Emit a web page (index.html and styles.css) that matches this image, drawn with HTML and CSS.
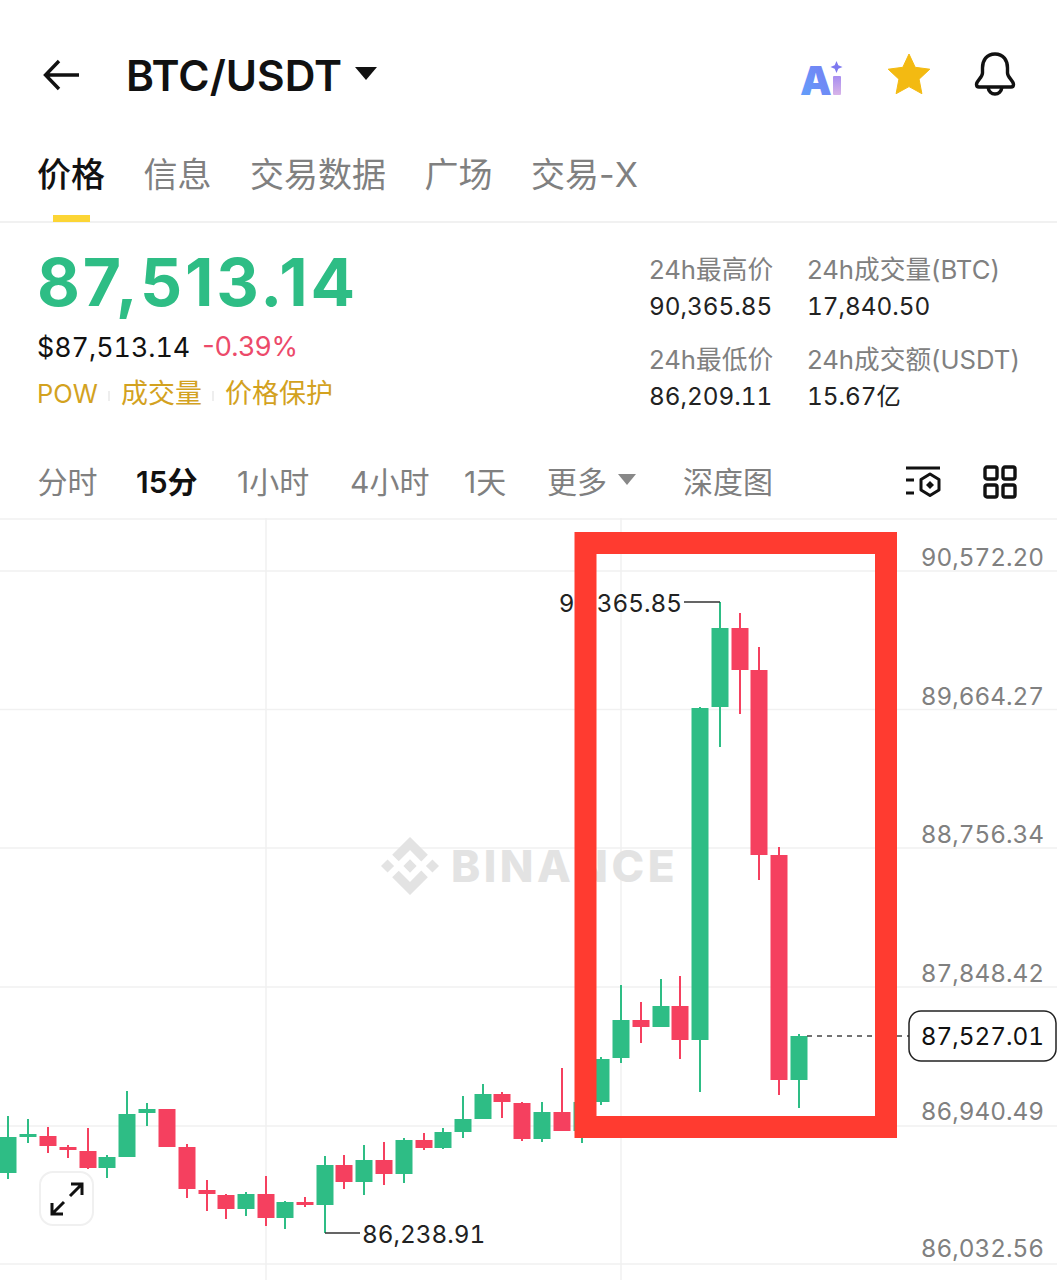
FILE: index.html
```html
<!DOCTYPE html>
<html lang="zh-CN">
<head>
  <meta charset="UTF-8">
  <meta name="viewport" content="width=device-width, initial-scale=1.0">
  <title>BTC/USDT</title>
  <link rel="stylesheet" href="styles.css">
</head>
<body>
  <header class="topbar">
    <svg class="back" viewBox="0 0 38 32" width="38" height="32">
      <path d="M36 16H3M16 2L2.500 16L16 30" fill="none" stroke="#111" stroke-width="3.400"/>
    </svg>
    <h1 class="pair">BTC/USDT</h1>
    <span class="pair-caret"></span>
    <div class="top-icons">
      <svg class="ai" viewBox="0 0 44 36" width="44" height="36">
        <defs>
          <linearGradient id="aiA" x1="0" y1="1" x2="1" y2="0">
            <stop offset="0" stop-color="#5fa4fb"/>
            <stop offset="1" stop-color="#7a78f2"/>
          </linearGradient>
          <linearGradient id="aiI" x1="0" y1="0" x2="0" y2="1">
            <stop offset="0" stop-color="#a78df0"/>
            <stop offset="1" stop-color="#d8b4e8"/>
          </linearGradient>
        </defs>
        <text x="0" y="35" class="ai-a" fill="url(#aiA)">A</text>
        <rect x="33" y="16" width="8" height="19" rx="1" fill="url(#aiI)"/>
        <path d="M36.500 1L38.300 5.200L42.500 7L38.300 8.800L36.500 13L34.700 8.800L30.500 7L34.700 5.200Z" fill="#7d78f0"/>
      </svg>
      <svg class="star" viewBox="0 0 42 40" width="42" height="40">
        <path d="M21 0L27.200 13.300L41.800 15.200L31.100 25.200L33.900 39.700L21 32.600L8.100 39.700L10.900 25.200L0.200 15.200L14.800 13.300Z" fill="#f3ba12" stroke="#f3ba12" stroke-linejoin="round"/>
      </svg>
      <svg class="bell" viewBox="0 0 42 44" width="42" height="44">
        <path d="M21 2C12.500 2 8.500 8.500 8.500 16V21C8.500 25.500 2.500 28.500 2.500 32.500C2.500 34 3.500 35 5 35H37C38.500 35 39.500 34 39.500 32.500C39.500 28.500 33.500 25.500 33.500 21V16C33.500 8.500 29.500 2 21 2Z" fill="none" stroke="#111" stroke-width="3.400" stroke-linejoin="round"/>
        <path d="M14 35C14.500 39.500 17.500 42 21 42C24.500 42 27.500 39.500 28 35" fill="none" stroke="#111" stroke-width="3.400"/>
      </svg>
    </div>
  </header>

  <nav class="tabs">
    <a class="tab active">价格</a>
    <a class="tab">信息</a>
    <a class="tab">交易数据</a>
    <a class="tab">广场</a>
    <a class="tab">交易-X</a>
  </nav>

  <section class="stats">
    <div class="price-block">
      <div class="last-price">87,513.14</div>
      <div class="sub-price"><span class="fiat">$87,513.14</span><span class="change">-0.39%</span></div>
      <div class="tags">
        <span class="tag-latin">POW</span><i></i><span>成交量</span><i></i><span>价格保护</span>
      </div>
    </div>
    <dl class="day-stats">
      <div><dt>24h最高价</dt><dd>90,365.85</dd></div>
      <div><dt>24h成交量(BTC)</dt><dd>17,840.50</dd></div>
      <div><dt>24h最低价</dt><dd>86,209.11</dd></div>
      <div><dt>24h成交额(USDT)</dt><dd>15.67亿</dd></div>
    </dl>
  </section>

  <div class="intervals">
    <span class="iv iv-time">分时</span>
    <span class="iv iv-15 active">15分</span>
    <span class="iv iv-1h">1小时</span>
    <span class="iv iv-4h">4小时</span>
    <span class="iv iv-1d">1天</span>
    <span class="iv iv-more">更多<b class="more-caret"></b></span>
    <span class="iv iv-depth">深度图</span>
    <div class="chart-tools">
      <svg viewBox="0 0 36 34" width="36" height="34">
        <path d="M1 3H35M1 15H9M1 28H9" fill="none" stroke="#111" stroke-width="3"/>
        <path d="M25 9L34 14.500V25L25 30.500L16 25V14.500Z" fill="none" stroke="#111" stroke-width="3" stroke-linejoin="round"/>
        <path d="M25 16L29 20L25 24L21 20Z" fill="#111"/>
      </svg>
      <svg viewBox="0 0 34 34" width="34" height="34">
        <g fill="none" stroke="#111" stroke-width="3.400">
          <rect x="2" y="2" width="12" height="12" rx="2"/>
          <rect x="20" y="2" width="12" height="12" rx="2"/>
          <rect x="2" y="20" width="12" height="12" rx="2"/>
          <rect x="20" y="20" width="12" height="12" rx="2"/>
        </g>
      </svg>
    </div>
  </div>

  <main class="chart">
    <svg class="chart-svg" viewBox="0 518 1057 762" width="1057" height="762">
      <path class="grid" d="M0 519H1057M0 571H1057M0 709.500H1057M0 848H1057M0 987H1057M0 1126H1057M0 1264H1057M266 518V1280M621 518V1280"/>

      <g class="watermark">
        <svg x="381" y="837" width="58" height="58" viewBox="0 0 126.610 126.610">
          <path d="M38.730 53.200L63.320 28.620L87.930 53.230L102.240 38.920L63.320 0L24.430 38.900Z"/>
          <path d="M0 63.310L14.300 49L28.610 63.310L14.300 77.610Z"/>
          <path d="M38.730 73.410L63.320 97.990L87.920 73.390L102.230 87.680L63.320 126.610L24.420 87.700Z"/>
          <path d="M98 63.310L112.300 49L126.610 63.310L112.300 77.610Z"/>
          <path d="M77.830 63.300L63.320 48.780L48.820 63.280L63.320 77.780Z"/>
        </svg>
        <text x="451" y="882">BINANCE</text>
      </g>

      <g id="candles"></g>

      <path class="leader" d="M684 602H720M325 1233H360"/>
      <text class="mark" x="682" y="612" text-anchor="end">90,365.85</text>
      <text class="mark" x="362" y="1243">86,238.91</text>

      <path class="last-line" d="M807 1036H909"/>

      <rect class="frame" x="585.500" y="543" width="300.500" height="584"/>

      <g class="axis">
        <text x="1044" y="566">90,572.20</text>
        <text x="1044" y="705">89,664.27</text>
        <text x="1044" y="843">88,756.34</text>
        <text x="1044" y="982">87,848.42</text>
        <text x="1044" y="1120">86,940.49</text>
        <text x="1044" y="1257">86,032.56</text>
      </g>

      <rect class="last-tag" x="909" y="1011" width="147" height="50" rx="12"/>
      <text class="last-value" x="1044" y="1045">87,527.01</text>
    </svg>

    <button class="expand">
      <svg viewBox="0 0 36 36" width="36" height="36">
        <path d="M3 33L15 21M3 22V33H14M33 3L21 15M22 3H33V14" fill="none" stroke="#111" stroke-width="3"/>
      </svg>
    </button>
  </main>

  <script src="chart.js"></script>
</body>
</html>
```

FILE: styles.css
```css
:root {
  --green: #2ebd85;
  --red: #f6465d;
  --gold: #d3a21f;
  --grey: #808080;
  --line: #f1f1f1;
  --text: #111;
}

* {
  margin: 0;
  padding: 0;
  box-sizing: border-box;
}

body {
  width: 1057px;
  height: 1280px;
  overflow: hidden;
  background: #fff;
  color: var(--text);
  font-family: Inter, "Noto Sans CJK SC", sans-serif;
}

.fiat,
.day-stats dd,
.mark,
.axis text,
.last-value {
  font-variant-numeric: tabular-nums;
}

.topbar {
  height: 150px;
  display: flex;
  align-items: center;
  padding: 0 41px 0 43px;
}

.back {
  margin-right: 45px;
}

.pair {
  font-size: 42.500px;
  font-weight: 600;
}

.pair-caret {
  margin: -3px 0 0 13px;
  border-left: 11px solid transparent;
  border-right: 11px solid transparent;
  border-top: 13px solid #111;
}

.top-icons {
  margin-left: auto;
  display: flex;
  align-items: center;
  gap: 44px;
}

.ai {
  margin-top: 6px;
  overflow: visible;
}

.ai-a {
  font-size: 40px;
  font-weight: 900;
}

.star {
  margin-top: -3px;
}

.bell {
  margin-top: -3px;
}

.tabs {
  height: 73px;
  display: flex;
  gap: 38.500px;
  padding: 3px 37px 0;
  border-bottom: 2px solid var(--line);
}

.tab {
  position: relative;
  font-size: 34px;
  line-height: 44px;
  color: var(--grey);
}

.tab.active {
  color: var(--text);
  font-weight: 500;
}

.tab.active::after {
  content: "";
  position: absolute;
  left: 16px;
  top: 62px;
  width: 37px;
  height: 7px;
  background: #fcd535;
}

.stats {
  height: 222px;
  display: flex;
  justify-content: space-between;
  padding: 0 37px 0 37px;
}

.last-price {
  margin-top: 21px;
  font-size: 66px;
  line-height: 76px;
  font-weight: 700;
  letter-spacing: 2.800px;
  color: var(--green);
}

.sub-price {
  margin-top: 9px;
  display: flex;
  gap: 12px;
  font-size: 26.800px;
  line-height: 36px;
}

.change {
  font-size: 27px;
  color: #ec4a6a;
}

.tags {
  margin-top: 9px;
  display: flex;
  align-items: center;
  gap: 10.500px;
  font-size: 27px;
  line-height: 40px;
  color: var(--gold);
}

.tag-latin {
  font-size: 25.500px;
}

.tags i {
  width: 2px;
  height: 10px;
  margin-top: 4px;
  background: #eee;
}

.day-stats {
  margin-top: 29px;
  width: 371px;
  display: grid;
  grid-template-columns: 158px 1fr;
  row-gap: 18px;
  align-content: start;
  font-size: 25.700px;
  line-height: 36px;
  white-space: nowrap;
}

.day-stats dt {
  color: var(--grey);
}

.day-stats dd {
  font-size: 24.300px;
  color: #222;
}

.intervals {
  height: 73px;
  display: flex;
  align-items: center;
  padding: 0 40px 4px 37.500px;
  font-size: 30px;
  color: var(--grey);
}

.iv-time { width: 98.500px; }
.iv-15 { width: 101px; }
.iv-1h { width: 113px; }
.iv-4h { width: 114px; }
.iv-1d { width: 83px; }
.iv-more { width: 136px; display: flex; align-items: center; }

.iv.active {
  color: var(--text);
  font-weight: 600;
}

.more-caret {
  margin: 0 0 0 11px;
  border-left: 9px solid transparent;
  border-right: 9px solid transparent;
  border-top: 11px solid #888;
}

.chart-tools {
  margin: 4px 0 0 auto;
  display: flex;
  align-items: center;
  gap: 42px;
}

.chart {
  position: relative;
  height: 762px;
  overflow: hidden;
}

.chart-svg {
  display: block;
}

.grid {
  fill: none;
  stroke: var(--line);
  stroke-width: 1.500;
}

.watermark {
  fill: #e3e3e3;
}

.watermark text {
  font-size: 44px;
  font-weight: 800;
  letter-spacing: 3.500px;
}

.up { fill: var(--green); }
.down { fill: #f5405f; }

.leader {
  fill: none;
  stroke: #333;
  stroke-width: 1.500;
}

.mark {
  font-size: 24.300px;
  fill: #222;
}

.last-line {
  stroke: #444;
  stroke-width: 1.500;
  stroke-dasharray: 5 5;
}

.frame {
  fill: none;
  stroke: #ff3b30;
  stroke-width: 22;
}

.axis text {
  font-size: 24.300px;
  fill: var(--grey);
  text-anchor: end;
}

.last-tag {
  fill: #fff;
  stroke: #222;
  stroke-width: 1.500;
}

.last-value {
  font-size: 24.300px;
  fill: #111;
  text-anchor: end;
}

.expand {
  position: absolute;
  left: 39px;
  top: 653px;
  width: 55px;
  height: 55px;
  display: flex;
  align-items: center;
  justify-content: center;
  background: #fff;
  border: 2px solid #f0f0f0;
  border-radius: 14px;
}
```

FILE: chart.js
```js
// x, high, low, body top, body bottom, direction
const candles = [
  [8, 1116, 1179, 1137, 1173, 'up'],
  [28, 1119, 1143, 1134, 1137, 'up'],
  [48, 1127, 1153, 1136, 1146, 'down'],
  [68, 1145, 1158, 1147, 1150, 'down'],
  [88, 1128, 1169, 1151, 1168, 'down'],
  [107, 1155, 1178, 1157, 1168, 'up'],
  [127, 1091, 1157, 1114, 1157, 'up'],
  [147, 1103, 1126, 1109, 1113, 'up'],
  [167, 1109, 1147, 1109, 1147, 'down'],
  [187, 1144, 1198, 1147, 1189, 'down'],
  [207, 1180, 1211, 1190, 1194, 'down'],
  [226, 1194, 1219, 1195, 1209, 'down'],
  [246, 1192, 1216, 1194, 1209, 'up'],
  [266, 1176, 1226, 1194, 1218, 'down'],
  [285, 1201, 1229, 1202, 1218, 'up'],
  [305, 1197, 1207, 1202, 1205, 'down'],
  [325, 1156, 1233, 1165, 1205, 'up'],
  [344, 1155, 1189, 1165, 1182, 'down'],
  [364, 1145, 1195, 1160, 1182, 'up'],
  [384, 1142, 1185, 1160, 1174, 'down'],
  [404, 1138, 1183, 1140, 1174, 'up'],
  [424, 1133, 1150, 1140, 1148, 'down'],
  [443, 1128, 1149, 1132, 1148, 'up'],
  [463, 1096, 1138, 1119, 1132, 'up'],
  [483, 1084, 1119, 1094, 1119, 'up'],
  [502, 1092, 1118, 1094, 1102, 'down'],
  [522, 1102, 1141, 1103, 1139, 'down'],
  [542, 1102, 1142, 1112, 1139, 'up'],
  [562, 1068, 1131, 1112, 1131, 'down'],
  [582, 1102, 1143, 1102, 1131, 'up'],
  [601, 1057, 1105, 1059, 1102, 'up'],
  [621, 985, 1063, 1020, 1058, 'up'],
  [641, 1002, 1043, 1020, 1027, 'down'],
  [661, 979, 1027, 1006, 1027, 'up'],
  [680, 976, 1059, 1006, 1040, 'down'],
  [700, 707, 1092, 708, 1040, 'up'],
  [720, 602, 747, 628, 707, 'up'],
  [740, 613, 714, 628, 670, 'down'],
  [759, 647, 880, 670, 855, 'down'],
  [779, 847, 1095, 855, 1080, 'down'],
  [799, 1034, 1108, 1036, 1080, 'up']
];

const group = document.getElementById('candles');

function addRect(x, y, w, h, cls) {
  const r = document.createElementNS('http://www.w3.org/2000/svg', 'rect');
  r.setAttribute('x', x);
  r.setAttribute('y', y);
  r.setAttribute('width', w);
  r.setAttribute('height', h);
  r.setAttribute('class', cls);
  group.appendChild(r);
}

candles.forEach(([x, high, low, top, bottom, dir]) => {
  addRect(x - 1, high, 2, low - high, dir);
  addRect(x - 8.5, top, 17, bottom - top, dir);
});
```
